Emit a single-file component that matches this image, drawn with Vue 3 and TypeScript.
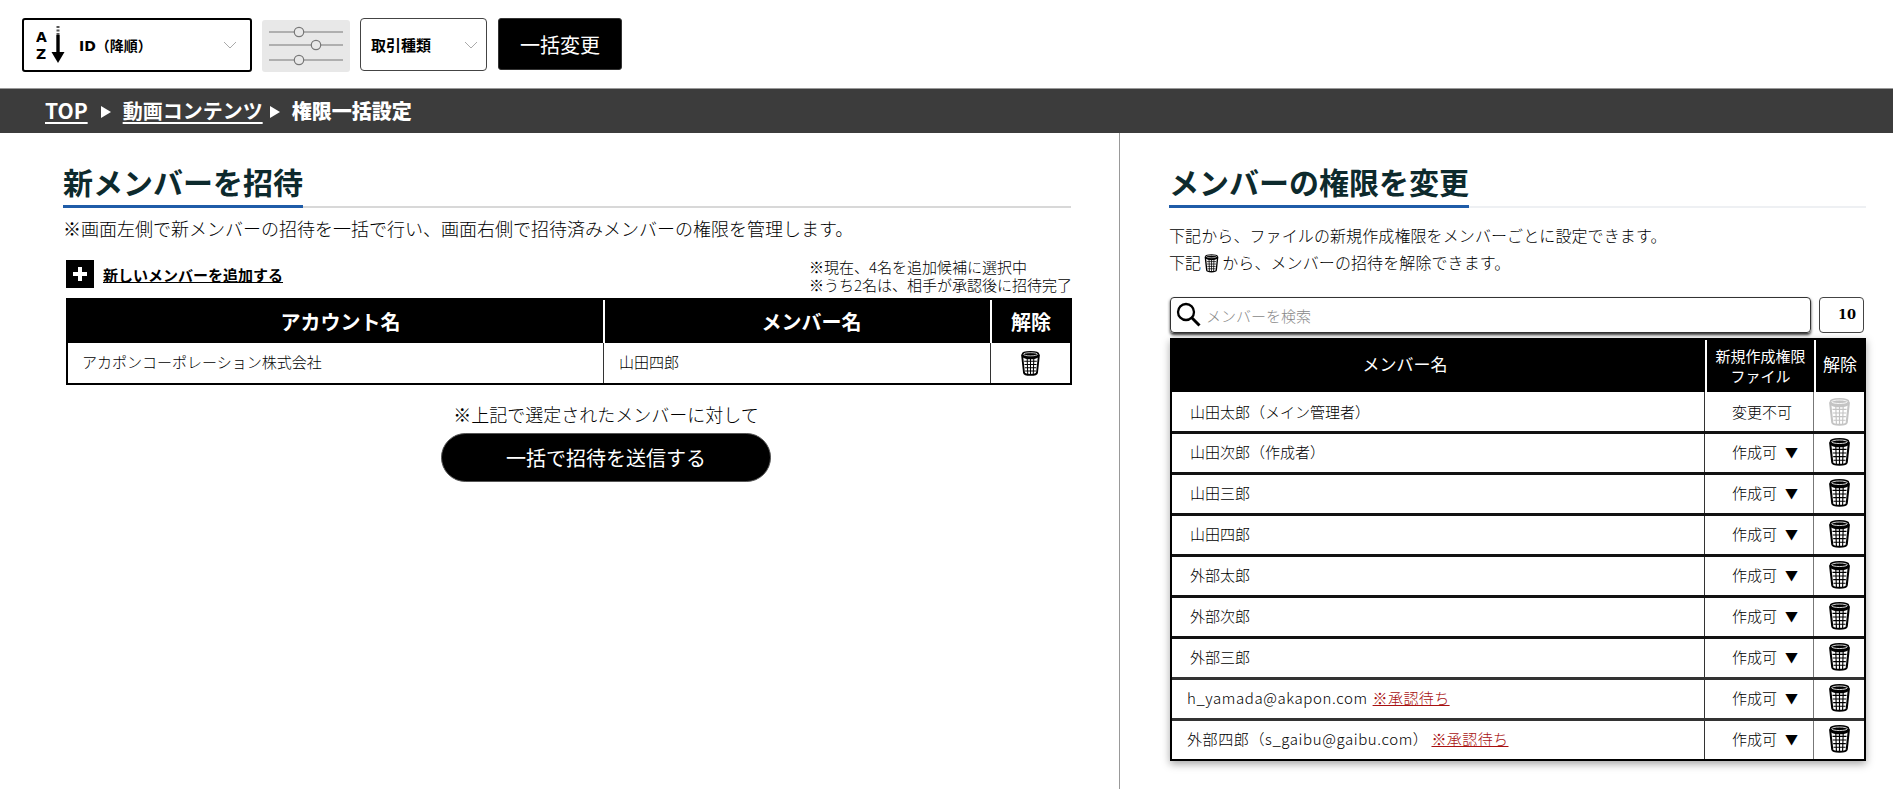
<script setup lang="ts">
interface Member {
  name: string
  pending?: boolean
  fixed?: boolean
  gap?: boolean
}
const members: Member[] = [
  { name: '山田太郎（メイン管理者）', fixed: true },
  { name: '山田次郎（作成者）' },
  { name: '山田三郎' },
  { name: '山田四郎' },
  { name: '外部太郎' },
  { name: '外部次郎' },
  { name: '外部三郎' },
  { name: 'h_yamada@akapon.com', pending: true, gap: true },
  { name: '外部四郎（s_gaibu@gaibu.com）', pending: true, gap: true }
]
</script>

<template>
  <div class="page">
    <svg class="defs" aria-hidden="true">
      <symbol id="trash" viewBox="0 0 22 28">
        <path d="M2 6 L4 24.5 Q4.4 26.8 11 26.8 Q17.6 26.8 18 24.5 L20 6 Z" fill="#fff" stroke="currentColor" stroke-width="2" />
        <path d="M4.2 12 H17.8 M4.5 15.5 H17.5 M4.9 19 H17.1 M5.2 22.5 H16.8 M7.4 8 L8 26 M11 8 V26 M14.6 8 L14 26" stroke="currentColor" stroke-width="1.1" fill="none" />
        <path d="M1.5 4.5 Q1.5 1 11 1 Q20.5 1 20.5 4.5 L20 7.5 Q17 10 11 10 Q5 10 2 7.5 Z" fill="currentColor" />
        <ellipse cx="11" cy="4.6" rx="7.6" ry="1.7" fill="none" stroke="#fff" stroke-width=".8" />
      </symbol>
    </svg>

    <div class="toolbar">
      <div class="sort-select">
        <svg class="sort-icon" viewBox="0 0 34 38">
          <text x="0" y="16" class="az">A</text>
          <text x="0" y="33" class="az">Z</text>
          <path d="M22 0 V2 M22 3.5 V5.5 M22 7 V9" stroke="#555" stroke-width="3" fill="none" />
          <path d="M22 9 V28" stroke="#000" stroke-width="3.4" fill="none" />
          <path d="M15.5 26 H28.5 L22 37 Z" fill="#000" />
        </svg>
        <span class="sort-label">ID（降順）</span>
        <svg class="chev" viewBox="0 0 14 8"><path d="M1 1 L7 7 L13 1" fill="none" stroke="#aaa" stroke-width="1" /></svg>
      </div>
      <div class="sliders">
        <svg viewBox="0 0 88 52" width="88" height="52">
          <g stroke="#777" stroke-width="1.2" fill="#e8e8e8">
            <path d="M7 12 H81 M7 25 H81 M7 40 H81" />
            <circle cx="37" cy="12" r="4.7" />
            <circle cx="54" cy="25" r="4.7" />
            <circle cx="37" cy="40" r="4.7" />
          </g>
        </svg>
      </div>
      <div class="kind-select">
        <span>取引種類</span>
        <svg class="chev" viewBox="0 0 14 8"><path d="M1 1 L7 7 L13 1" fill="none" stroke="#aaa" stroke-width="1" /></svg>
      </div>
      <button class="bulk-btn">一括変更</button>
    </div>

    <nav class="crumbs">
      <a class="top">TOP</a>
      <span class="tri"></span>
      <a>動画コンテンツ</a>
      <span class="tri near"></span>
      <strong>権限一括設定</strong>
    </nav>

    <main class="split">
      <section class="left">
        <div class="heading"><h2>新メンバーを招待</h2></div>
        <p class="lead">※画面左側で新メンバーの招待を一括で行い、画面右側で招待済みメンバーの権限を管理します。</p>

        <div class="add-row">
          <div class="add">
            <span class="plus"><svg viewBox="0 0 16 16" width="16" height="16"><path d="M8 1 V15 M1 8 H15" stroke="#fff" stroke-width="4" /></svg></span>
            <a>新しいメンバーを追加する</a>
          </div>
          <div class="notes">
            <div>※現在、4名を追加候補に選択中</div>
            <div>※うち2名は、相手が承認後に招待完了</div>
          </div>
        </div>

        <div class="invite-table">
          <div class="ih">アカウント名</div>
          <div class="ih">メンバー名</div>
          <div class="ih">解除</div>
          <div class="ic">アカポンコーポレーション株式会社</div>
          <div class="ic">山田四郎</div>
          <div class="ic trash-cell"><svg class="trash"><use href="#trash" /></svg></div>
        </div>

        <div class="send">
          <p>※上記で選定されたメンバーに対して</p>
          <button>一括で招待を送信する</button>
        </div>
      </section>

      <section class="right">
        <div class="heading faint"><h2>メンバーの権限を変更</h2></div>
        <p class="desc first">下記から、ファイルの新規作成権限をメンバーごとに設定できます。</p>
        <p class="desc">下記<svg class="trash inline"><use href="#trash" /></svg>から、メンバーの招待を解除できます。</p>

        <div class="search-row">
          <div class="search">
            <svg viewBox="0 0 26 26" width="26" height="26">
              <circle cx="10" cy="10" r="8" fill="none" stroke="#000" stroke-width="2.3" />
              <path d="M15.8 15.8 L23.5 23.5" stroke="#000" stroke-width="3" />
            </svg>
            <span>メンバーを検索</span>
          </div>
          <div class="count">10</div>
        </div>

        <div class="member-table">
          <div class="mh">
            <div class="c1">メンバー名</div>
            <div class="c2">新規作成権限<br />ファイル</div>
            <div class="c3">解除</div>
          </div>
          <div v-for="m in members" :key="m.name" class="mr" :class="{ fixed: m.fixed, gap: m.gap }">
            <div class="c1">
              <span class="name">{{ m.name }}</span>
              <a v-if="m.pending" class="pending">※承認待ち</a>
            </div>
            <div class="c2">
              <template v-if="m.fixed">変更不可</template>
              <template v-else>作成可<span class="arrow">▼</span></template>
            </div>
            <div class="c3"><svg class="trash big"><use href="#trash" /></svg></div>
          </div>
        </div>
      </section>
    </main>
  </div>
</template>

<style>
html, body { margin: 0; background: #fff; }
</style>

<style scoped>
.page {
  width: 1893px;
  height: 789px;
  overflow: hidden;
  font-family: "Noto Sans CJK JP", "Noto Sans", sans-serif;
  font-weight: 300;
  color: #000;
  display: flex;
  flex-direction: column;
}
.defs { position: absolute; width: 0; height: 0; }
.toolbar { height: 88px; box-sizing: border-box; padding: 18px 0 0 22px; display: flex; gap: 10px; align-items: flex-start; }
.sort-select {
  width: 230px; height: 54px; box-sizing: border-box; border: 2px solid #000; border-radius: 3px;
  display: flex; align-items: center; padding: 0 13px 0 12px; font-weight: 700; font-size: 14px; color: #000;
}
.sort-icon { width: 34px; height: 38px; margin-right: 9px; }
.az { font: 700 14px "DejaVu Sans", sans-serif; }
.sort-label { flex: 1; font-family: "DejaVu Sans", "Noto Sans CJK JP", sans-serif; }
.chev { width: 14px; height: 8px; }
.sliders { width: 88px; height: 52px; margin-top: 2px; background: #e8e8e8; border-radius: 3px; display: flex; }
.kind-select {
  width: 127px; height: 53px; box-sizing: border-box; border: 1px solid #444; border-radius: 4px;
  display: flex; align-items: center; justify-content: space-between; padding: 0 8px 0 10px; font-weight: 700; font-size: 15px; color: #000;
}
.bulk-btn {
  width: 124px; height: 52px; margin-left: 1px; border: 1px solid #333; border-radius: 3px; background: #000; color: #fff;
  font: 400 20px "Noto Sans CJK JP", sans-serif; padding: 0;
}
.crumbs {
  height: 45px; flex: none; background: #3c3c3c; color: #fff; display: flex; align-items: center;
  padding: 0 0 2px 45px; font-size: 20px; font-weight: 700; box-sizing: border-box; border-top: 1px solid #999;
}
.crumbs a { text-decoration: underline; text-underline-offset: 3px; }
.crumbs .top { font-size: 21px; }
.tri { width: 0; height: 0; border-left: 10px solid #fff; border-top: 6.5px solid transparent; border-bottom: 6.5px solid transparent; margin: 3px 12px 0 13px; }
.tri.near { margin-left: 7px; margin-right: 12px; }
.split { flex: 1; display: flex; min-height: 0; }
.left { width: 1120px; box-sizing: border-box; padding: 28px 48px 0 63px; border-right: 1px solid #999; flex: none; }
.right { flex: 1; box-sizing: border-box; padding: 28px 28px 0 50px; }
.heading { border-bottom: 2px solid #d8d8d8; height: 47px; box-sizing: border-box; }
.heading.faint { border-bottom-color: #eef0f3; margin-left: -1px; }
.heading h2 {
  display: inline-block; margin: 0; height: 47px; box-sizing: border-box; border-bottom: 3px solid #1f5ca8;
  font-size: 30px; line-height: 40px; font-weight: 700; color: #0d2a2d;
}
.lead { margin: 6px 0 0; font-size: 18px; line-height: 28px; white-space: nowrap; }
.add-row { display: flex; justify-content: space-between; align-items: flex-end; margin: 8px -1px 0 3px; height: 48px; }
.add { display: flex; align-items: center; gap: 9px; margin-bottom: 10px; }
.plus { width: 28px; height: 28px; background: #000; display: flex; align-items: center; justify-content: center; }
.add a { font-size: 15px; font-weight: 700; text-decoration: underline; color: #000; }
.notes { font-size: 15px; line-height: 18px; margin-bottom: 4px; }
.invite-table {
  display: grid; grid-template-columns: 535px 387px 1fr; grid-template-rows: 43px 40px; margin: 0 -1px 0 3px;
  border: 2px solid #000; box-sizing: border-box; width: 1006px;
}
.ih { background: #000; color: #fff; font-size: 20px; font-weight: 700; display: flex; align-items: center; justify-content: center; border-left: 2px solid #fff; }
.ih:first-child { border-left: none; padding-left: 10px; }
.ih:nth-child(2) { padding-left: 28px; }
.ic { font-size: 15px; display: flex; align-items: center; padding: 0 0 3px 15px; border-left: 1px solid #333; }
.ic:nth-child(4) { border-left: none; padding-left: 14px; }
.trash-cell { padding: 0; justify-content: center; }
.trash { width: 21px; height: 26px; color: #000; }
.send { text-align: center; margin-top: 15px; width: 1086px; }
.send p { margin: 0; font-size: 18px; line-height: 28px; }
.send button {
  display: block; margin: 5px auto 0; width: 330px; height: 49px; border-radius: 25px; border: 1px solid #555; background: #000; color: #fff;
  font: 400 20px "Noto Sans CJK JP", sans-serif;
}
.desc { margin: 0 0 0 -1px; font-size: 16px; line-height: 27px; white-space: nowrap; letter-spacing: .1px; }
.desc.first { margin-top: 14px; }
.trash.inline { width: 15px; height: 20px; vertical-align: -4px; margin: 0 3px; }
.search-row { display: flex; gap: 8px; margin-top: 21px; }
.search {
  width: 641px; height: 36px; box-sizing: border-box; border: 1px solid #333; border-radius: 4px; box-shadow: 0 2px 3px rgba(0,0,0,.8);
  display: flex; align-items: center; padding-left: 5px; gap: 4px; font-size: 15px; color: #888;
}
.search span { margin-top: 1px; }
.count {
  width: 45px; height: 36px; box-sizing: border-box; border: 1px solid #444; border-radius: 4px; text-align: right; padding-right: 7px;
  font: 700 13px/34px "DejaVu Serif", serif; color: #000;
}
.member-table { margin-top: 5px; width: 696px; box-sizing: border-box; border: 2px solid #000; box-shadow: 0 3px 8px rgba(0,0,0,.35); }
.mh, .mr { display: grid; grid-template-columns: 533px 109px 1fr; }
.mh { background: #000; color: #fff; height: 52px; }
.mh > div { display: flex; align-items: center; justify-content: center; text-align: center; font-weight: 400; }
.mh .c1 { font-size: 17px; padding-right: 67px; padding-bottom: 6px; }
.mh .c2 { font-size: 15px; line-height: 20px; border-left: 2px solid #fff; }
.mh .c3 { font-size: 17px; border-left: 2px solid #fff; padding-bottom: 6px; }
.mr { height: 41px; box-sizing: border-box; border-top: 3px solid #111; font-size: 15px; }
.mr.fixed { border-top: none; height: 39px; }
.mr.gap { border-top-color: #333; }
.mr > div { display: flex; align-items: center; padding-bottom: 4px; box-sizing: border-box; }
.mr.fixed > div { padding-bottom: 0; }
.mr .c1 { padding-left: 18px; border-right: 1px solid #333; }
.mr.gap .c1 { padding-left: 15px; }
.mr.gap .name { letter-spacing: .6px; }
.mr .c2 { padding-left: 27px; border-right: 1px solid #777; }
.mr .c3 { justify-content: center; }
.arrow { margin-left: 8px; font-size: 13px; color: #000; }
.pending { color: #a81010; text-decoration: underline; margin-left: 5px; letter-spacing: .4px; }
.mr.gap:last-child .pending { margin-left: 3px; }
.trash.big { width: 23px; height: 29px; }
.mr.fixed .trash { color: #c4c4c4; }
</style>
